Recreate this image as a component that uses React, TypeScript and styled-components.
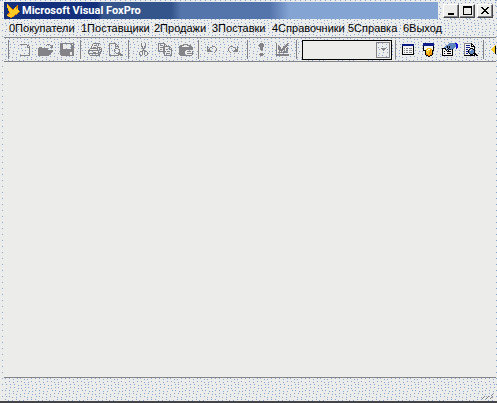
import React from 'react';
import styled, { createGlobalStyle } from 'styled-components';

const face = '#ececea';
const dot = '#84a4d4';
const gray = '#848488';

const speckles = [
  [1, 0], [9, 1], [16, 0], [23, 1], [5, 3], [13, 3], [20, 4], [27, 3],
  [2, 6], [10, 6], [17, 7], [24, 6], [6, 9], [14, 10], [21, 9], [28, 10],
  [1, 12], [9, 13], [18, 12], [25, 13], [5, 15], [12, 16], [20, 15], [28, 16],
  [2, 18], [8, 19], [16, 18], [23, 19], [4, 22], [12, 21], [19, 22], [27, 21],
  [5, 0], [13, 0], [20, 1], [27, 0], [1, 4], [9, 4], [17, 3], [24, 4],
  [6, 6], [14, 7], [21, 6], [28, 7], [2, 10], [10, 9], [17, 10], [24, 9],
  [5, 12], [13, 13], [21, 12], [28, 13], [1, 16], [9, 15], [16, 16], [24, 15],
  [5, 18], [12, 19], [20, 18], [27, 19], [1, 21], [8, 22], [15, 22], [23, 21],
];
const texture = `url("data:image/svg+xml,${encodeURIComponent(
  `<svg xmlns="http://www.w3.org/2000/svg" width="30" height="24" shape-rendering="crispEdges"><path fill="${dot}" d="${speckles
    .map(([x, y]) => `M${x} ${y}h1v1h-1z`)
    .join('')}"/></svg>`,
)}")`;

const GlobalStyle = createGlobalStyle`
  * { box-sizing: border-box; }
  body { margin: 0; background: ${face}; }
  button, select { font: inherit; color: inherit; }
`;

const Window = styled.div`
  min-height: 100vh;
  display: flex;
  flex-direction: column;
  padding: 2px 1px 0 4px;
  background:
    linear-gradient(${dot} 1px, transparent 1px) 2px 0 / 1px 6px repeat-y,
    linear-gradient(${dot} 1px, transparent 1px) 100% 0 / 1px 6px repeat-y,
    linear-gradient(90deg, ${dot} 1px, transparent 1px) 0 0 / 5px 1px repeat-x,
    ${face};
  border-bottom: 2px solid #444448;
  font: 11px/16px 'Liberation Sans', sans-serif;
  color: #000;
`;

const TitleBar = styled.header`
  display: flex;
  align-items: center;
  height: 17px;
  padding-left: 2px;
  color: #fff;
  background: linear-gradient(90deg, #14307c 0 19%, #34548c 20% 34%, #5474ac 36% 54%, #84a4d4 58%);
`;

const Title = styled.h1`
  flex: 1;
  margin: 0 0 0 2px;
  font: bold 11px/16px Roboto, 'Liberation Sans', sans-serif;
  white-space: nowrap;
`;

const Controls = styled.div`
  display: flex;
  align-self: stretch;
  align-items: center;
  padding: 0 3px 0 5px;
  background: ${texture} ${face};
`;

const Control = styled.button<{ $spaced?: boolean }>`
  width: 16px;
  height: 14px;
  padding: 0;
  margin-left: ${(p) => (p.$spaced ? 2 : 0)}px;
  display: grid;
  place-items: center;
  border: 1px solid;
  border-color: #fff #444448 #444448 #fff;
  box-shadow: inset -1px -1px ${gray};
  background: ${face};
`;

const MenuBar = styled.nav`
  display: flex;
  gap: 11px;
  height: 18px;
  padding-left: 5px;
  background: ${texture} ${face};
`;

const MenuItem = styled.button<{ $width: number }>`
  flex: none;
  width: ${(p) => p.$width}px;
  padding: 0;
  border: 0;
  background: none;
  text-align: left;
  white-space: nowrap;
`;

const ToolBar = styled.div`
  display: flex;
  align-items: center;
  height: 25px;
  border-top: 1px solid ${gray};
  border-bottom: 1px solid ${gray};
  background: ${texture} ${face};
  overflow: hidden;
`;

const Divider = styled.span<{ $before?: number; $after?: number }>`
  flex: none;
  width: 1px;
  height: 19px;
  margin: 0 ${(p) => p.$after ?? 4}px 0 ${(p) => p.$before ?? 4}px;
  background: ${gray};
`;

const Tool = styled.button<{ $width?: number }>`
  flex: none;
  display: grid;
  place-items: center;
  width: ${(p) => p.$width ?? 21}px;
  height: 22px;
  padding: 0;
  border: 0;
  background: none;
`;

const Combo = styled.div`
  position: relative;
  flex: none;
  width: 90px;
  height: 20px;
  border: 1px solid #000;
  background: ${face};
`;

const Select = styled.select`
  display: block;
  width: 100%;
  height: 100%;
  border: 0;
  background: none;
  appearance: none;
`;

const Arrow = styled.span`
  position: absolute;
  top: 1px;
  right: 1px;
  width: 14px;
  height: 16px;
  display: grid;
  place-items: center;
  border: 1px solid ${gray};
  background: ${texture} ${face};
  pointer-events: none;
`;

const Workspace = styled.main`
  flex: 1;
`;

const StatusBar = styled.footer`
  display: flex;
  justify-content: flex-end;
  align-items: flex-end;
  height: 24px;
  padding: 0 2px 2px 0;
  border-top: 1px solid ${gray};
  background: ${texture} ${face};
`;

const palette: Record<string, string> = {
  g: gray, k: '#000000', n: '#0c1c84', w: '#f4f4f2', y: '#fccc24', o: '#e47c04', b: '#5c84bc', u: '#0c0ccc',
};

function Pixels({ rows }: { rows: string[] }) {
  const width = Math.max(...rows.map((r) => r.length));
  return (
    <svg width={width} height={rows.length} viewBox={`0 0 ${width} ${rows.length}`} shapeRendering="crispEdges" aria-hidden="true">
      {Object.entries(palette).map(([key, fill]) => {
        const d = rows
          .flatMap((row, y) => [...row].map((c, x) => (c === key ? `M${x} ${y}h1v1h-1z` : '')))
          .join('');
        return d && <path key={key} fill={fill} d={d} />;
      })}
    </svg>
  );
}

const art = {
  fox: [
    '.y............', '.yo........o..', '.yyo......oo..', '.yyyo....yoo..', '..yyyo..yyoy..', '..yyyyooyyyy..', '..oyyyyyyyyyy.',
    '...yyyyyyyyyyo', '...oyyyyyyyyo.', '..ooyyyyyyyo..', '.ooyyyyyyoo...', '.yyyyyyyo.....', '..oyyyyo......', '....oo........',
  ],
  blank: [
    'ggggggg...', '.......gg.', '.......g.g', '.......ggg', '.........g', '.........g', '.........g', '.........g', '.........g', '.........g', '.........g', 'gggggggggg',
  ],
  open: [
    '.........ggg...', '........g...g.g', '.............gg', '.ggg........ggg', 'gggggggggg.....', 'gggggggggg.....', 'ggggggggggggggg', 'ggggggggggggggg', 'gggggggggggggg.', 'ggggggggggggg..', 'gggggggggggg...', 'ggggggggggg....',
  ],
  save: [
    'gggggggggggggg', 'ggg........g.g', 'ggg........ggg', 'ggg........ggg', 'ggg........ggg', 'ggg........ggg', 'gggggggggggggg', 'gggggggggggggg', 'gggggggggggggg', 'gggggggggg..gg', 'gggggggggg..gg', 'gggggggggg..gg', '.ggggggggggggg',
  ],
  print: [
    '.....ggggggg..', '....g.....g...', '....g.ggg.g...', '...g.....g....', '...g.ggg.gggg.', '..gggggggg.g.g', '.g.......g.ggg', 'ggggggggggg..g', 'g.........g.gg', 'g....ggg..ggg.', 'ggggggggggg.g.', '.g........gg..', '..gggggggggg..',
  ],
  preview: [
    'ggggggg.......', 'g.....gg......', 'g.....g.g.....', 'g.....gggg....', 'g........g....', 'g.....ggg.....', 'g....g...gg...', 'g....g....g...', 'g....g....g...', 'g.....g..gg...', 'g......ggggg..', 'g........gggg.', 'gggggggggg.ggg',
  ],
  cut: [
    '..g...g..', '..g...g..', '..g...g..', '..gg.gg..', '...g.g...', '...ggg...', '....g....', '...ggg...', '.ggg.ggg.', 'g..g.g..g', 'g..g.g..g', 'g..g.g..g', '.gg...gg.',
  ],
  copy: [
    'ggggggg.......', 'g.....gg......', 'g.ggg.g.g.....', 'g....ggggggg..', 'g.ggggg....gg.', 'g....gg....g.g', 'g.gg.gg.gg.ggg', 'g....gg......g', 'gggggggg.ggg.g', '.....gg......g', '......g.gggg.g', '......g......g', '......gggggggg',
  ],
  paste: [
    '....ggggg.....', '.gggg...gggg..', 'ggg.......ggg.', 'gggggggggggggg', 'gggggggggggggg', 'gggggggggggggg', 'ggggggg.......', 'gggggg..gggg.g', 'gggggg.......g', 'gggggg..gggggg', 'gggggg.......g', '.gggggggggggg.',
  ],
  undo: ['g....ggg..', 'g..gg...g.', 'g.g......g', 'ggg......g', 'gggg.....g', 'ggggg...g.', '.......g..'],
  redo: ['..ggg....g', '.g...gg..g', 'g......g.g', 'g......ggg', 'g.....gggg', '.g...ggggg', '..g.......'],
  run: ['.ggg.', 'ggggg', 'ggggg', 'ggggg', '.ggg.', '.ggg.', '.ggg.', '..g..', '.....', '.....', '.ggg.', 'ggggg', '.ggg.'],
  modify: [
    'g..........gg', 'g.........gg.', 'g.g......ggg.', 'g.gg...gggg..', 'g.ggg..ggg.g.', 'g.ggg.ggg.gg.', 'g.ggggggg.gg.', 'g..gggg.g.gg.', 'g..g.g.gggg..', 'g.gggggggggg.', 'g............', 'ggggggggggggg', 'ggggggggggggg',
  ],
  form: [
    'nnnnnnnnnnnn', 'nnnnnnnnnnnn', 'kwwwwwwwwwwk', 'kwwwwwwwwwwk', 'kwgwggwgggwk', 'kwwwwwwwwwwk', 'kwgwggwgggwk', 'kwwwwwwwwwwk', 'kwgwggwgggwk', 'kwwwwwwwwwwk', 'kkkkkkkkkkkk',
  ],
  data: [
    'nnnnnnnnnnn', 'nnnnnnnnnnn', 'nnnnnnnnnnn', 'kwwwwwwwwwk', 'kwwwwwwwwwk', 'kwwwyyyywwk', 'kwwyywwyowk', 'kkkywyyoykk', '..kyyyyoyk.', '..kyyyooyk.', '..koyyoyok.', '..kooyyook.', '...kkookk..', '.....kk....',
  ],
  properties: [
    '.......bbbbbbuu.', '......bbbbbbbbuu', '....bbbbbbbbbbuu', '...bbkbkbbbbbbuu', '..b.bkbkbbbbb.uu', 'kkkk.bkbbbbb..u.', 'kwwkbkbkkbk.....', 'kwwwkwkwwwk.....', 'kwkwwkkkkwk.....', 'kwwwwwwwwwk.....', 'kwkwwkkkkwk.....', 'kwwwwwwwwwk.....', 'kkkkkkkkkkk.....',
  ],
  find: [
    'gggggggk......', 'gwwwwwwkk.....', 'gwnnnnwkwk....', 'gwwwwwwkkkk...', 'gwnnnnwwwwk...', 'gwwwwwkkkwk...', 'gwnnwkbwbkk...', 'gwwwkbwbbbk...', 'gwnnkbbbbbk...', 'gwwwkbbbbbk...', 'gwnnwkbbbkkk..', 'gwwwwwkkkwkkk.', 'kkkkkkkkkkk.kk',
  ],
  more: ['....y', '...yk', '..yyk', '.yyyk', 'yyyyk', '.yyyk', '..yyk', '...yk', '....k'],
  minimize: ['.......', '.......', '.......', '.......', '.......', '.......', 'kkkkkk.', 'kkkkkk.'],
  maximize: ['kkkkkkkkk', 'kkkkkkkkk', 'k.......k', 'k.......k', 'k.......k', 'k.......k', 'k.......k', 'k.......k', 'kkkkkkkkk'],
  close: ['kk....kk', '.kk..kk.', '..kkkk..', '...kk...', '..kkkk..', '.kk..kk.', 'kk....kk'],
  arrow: ['ggggg', '.ggg.', '..g..'],
  grip: ['..........g.', '.........g..', '..g...g...g.', '.g...g...g..', 'g...g...g...'],
};

type ArtName = keyof typeof art;
const menus: [string, number][] = [
  ['0Покупатели', 61], ['1Поставщики', 62], ['2Продажи', 47], ['3Поставки', 49], ['4Справочники', 65], ['5Справка', 44], ['6Выход', 38],
];

function ToolGroup({ items, width }: { items: [ArtName, string][]; width?: number }) {
  return (
    <>
      {items.map(([icon, label]) => (
        <Tool key={icon} type="button" aria-label={label} $width={width}>
          <Pixels rows={art[icon]} />
        </Tool>
      ))}
    </>
  );
}

export default function App() {
  return (
    <Window>
      <GlobalStyle />
      <TitleBar>
        <Pixels rows={art.fox} />
        <Title>Microsoft Visual FoxPro</Title>
        <Controls>
          <Control type="button" aria-label="Minimize"><Pixels rows={art.minimize} /></Control>
          <Control type="button" aria-label="Maximize"><Pixels rows={art.maximize} /></Control>
          <Control type="button" aria-label="Close" $spaced><Pixels rows={art.close} /></Control>
        </Controls>
      </TitleBar>
      <MenuBar>
        {menus.map(([label, width]) => (
          <MenuItem key={label} type="button" $width={width}>{label}</MenuItem>
        ))}
      </MenuBar>
      <ToolBar role="toolbar" aria-label="Standard">
        <Divider $after={5} />
        <ToolGroup items={[['blank', 'New'], ['open', 'Open'], ['save', 'Save']]} />
        <Divider $before={3} $after={3} />
        <ToolGroup items={[['print', 'Print'], ['preview', 'Print preview']]} />
        <Divider $before={2} $after={4} />
        <ToolGroup items={[['cut', 'Cut'], ['copy', 'Copy'], ['paste', 'Paste']]} />
        <Divider $before={2} $after={2} />
        <ToolGroup items={[['undo', 'Undo'], ['redo', 'Redo']]} />
        <Divider $before={4} $after={3} />
        <ToolGroup items={[['run', 'Run'], ['modify', 'Modify form']]} />
        <Divider $before={3} $after={5} />
        <Combo>
          <Select aria-label="Database" />
          <Arrow><Pixels rows={art.arrow} /></Arrow>
        </Combo>
        <Divider $before={3} $after={1} />
        <ToolGroup items={[['form', 'Command window'], ['data', 'Data session'], ['properties', 'Properties'], ['find', 'Document view']]} />
        <Divider $before={2} $after={7} />
        <Tool type="button" aria-label="More" $width={5}><Pixels rows={art.more} /></Tool>
      </ToolBar>
      <Workspace />
      <StatusBar><Pixels rows={art.grip} /></StatusBar>
    </Window>
  );
}
